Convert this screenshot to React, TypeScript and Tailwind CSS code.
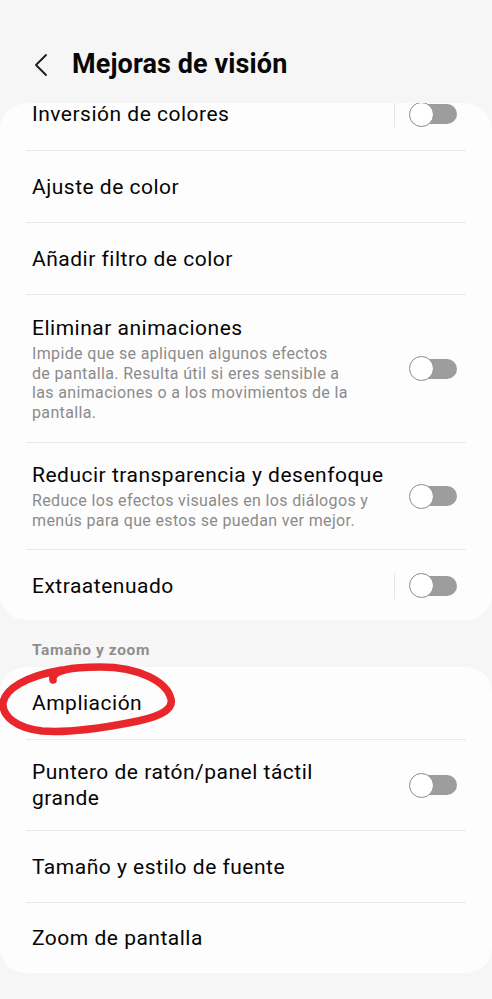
import React from 'react';

const Toggle: React.FC = () => (
    <div className="relative w-[48px] h-[25px] flex items-center shrink-0">
        <div className="absolute right-0 w-[42px] h-[20px] rounded-full bg-[#9d9d9d]" />
        <div className="relative w-[25px] h-[25px] rounded-full bg-white border-[1.5px] border-[#8c8c8c]" />
    </div>
);

const Divider: React.FC = () => <div className="mx-[26px] h-px bg-[#e9e9e9]" />;

type RowProps = {
    title: React.ReactNode;
    desc?: React.ReactNode;
    toggle?: boolean;
    split?: boolean;
    className?: string;
};

const Row: React.FC<RowProps> = ({ title, desc, toggle, split, className = '' }) => (
    <div className={`flex items-center pl-[32px] pr-[35px] ${className}`}>
        <div className="flex-1 min-w-0">
            <div className="text-[21px] leading-[26px] tracking-[0.5px] text-[#050505] whitespace-nowrap">{title}</div>
            {desc && (
                <div className="mt-[3px] text-[16px] leading-[19.5px] tracking-[0.35px] text-[#8b8b8b] whitespace-nowrap">{desc}</div>
            )}
        </div>
        {split && <div className="w-px h-[26px] bg-[#e6e6e6] mr-[14px]" />}
        {toggle && <Toggle />}
    </div>
);

const App: React.FC = () => {
    return (
        <div className="w-[492px] h-[999px] bg-[#f6f6f6] font-['Roboto','Noto_Sans',sans-serif] overflow-hidden">
            {/* Header */}
            <div className="h-[103px] flex items-center pl-[33px] pt-[26px]">
                <svg width="16" height="24" viewBox="0 0 16 24" fill="none" stroke="#1a1a1a" strokeWidth="1.8" strokeLinecap="round" strokeLinejoin="round">
                    <path d="M13 2 L3 12 L13 22" />
                </svg>
                <h1 className="ml-[23px] text-[27px] font-bold text-[#080808] tracking-[0.1px]">Mejoras de visión</h1>
            </div>

            {/* First card, scrolled */}
            <div className="h-[517px] bg-[#fdfdfd] rounded-[26px] rounded-t-[28px] overflow-hidden">
                <div className="-mt-[25px]">
                    <Row title="Inversión de colores" toggle split className="h-[72px]" />
                    <Divider />
                    <Row title="Ajuste de color" className="h-[71px]" />
                    <Divider />
                    <Row title="Añadir filtro de color" className="h-[71px]" />
                    <Divider />
                    <Row
                        title="Eliminar animaciones"
                        desc={<>Impide que se apliquen algunos efectos<br />de pantalla. Resulta útil si eres sensible a<br />las animaciones o a los movimientos de la<br />pantalla.</>}
                        toggle
                        className="h-[147px]"
                    />
                    <Divider />
                    <Row
                        title="Reducir transparencia y desenfoque"
                        desc={<>Reduce los efectos visuales en los diálogos y<br />menús para que estos se puedan ver mejor.</>}
                        toggle
                        className="h-[106px]"
                    />
                    <Divider />
                    <Row title="Extraatenuado" toggle split className="h-[71px]" />
                </div>
            </div>

            {/* Section header */}
            <div className="pl-[32px] pt-[20px] pb-[7px] text-[15.5px] leading-[20px] font-bold tracking-[0.6px] text-[#8e8e8e]">Tamaño y zoom</div>

            {/* Second card */}
            <div className="relative bg-[#fdfdfd] rounded-[26px]">
                <Row title="Ampliación" className="h-[72px]" />
                <Divider />
                <Row title={<>Puntero de ratón/panel táctil<br />grande</>} toggle className="h-[90px]" />
                <Divider />
                <Row title="Tamaño y estilo de fuente" className="h-[71px]" />
                <Divider />
                <Row title="Zoom de pantalla" className="h-[70px]" />

                {/* Hand-drawn red mark */}
                <svg className="absolute left-0 -top-[12px] pointer-events-none" width="190" height="95" viewBox="0 0 190 95" fill="none">
                    <path
                        d="M53 25 C51 15 72 12 100 12 C140 12 167 27 171 44 C174 56 156 63 128 68 C96 74 66 78 42 76 C16 73 2 61 3 48 C5 34 26 21 62 15"
                        stroke="#e8262b"
                        strokeWidth="7.5"
                        strokeLinecap="round"
                        strokeLinejoin="round"
                    />
                </svg>
            </div>
        </div>
    );
};

export default App;
